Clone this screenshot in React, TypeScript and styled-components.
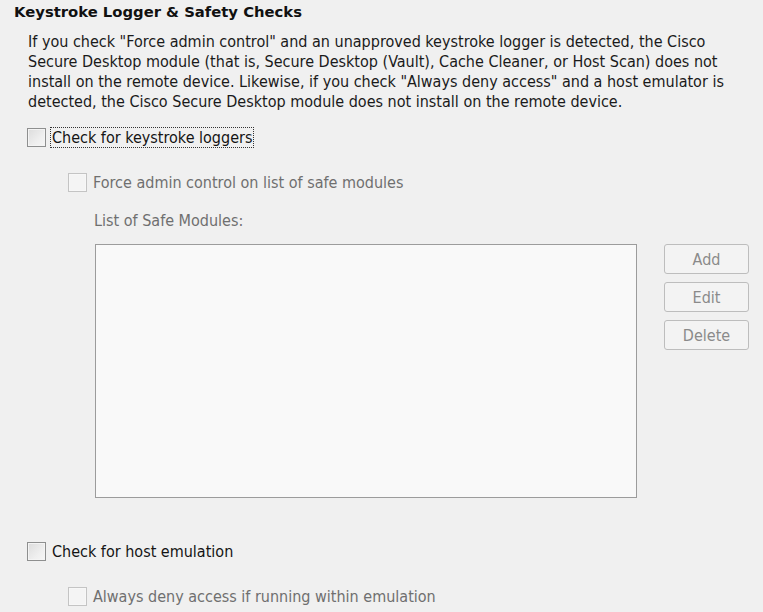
import React from 'react';
import styled, { createGlobalStyle } from 'styled-components';

const GlobalStyle = createGlobalStyle`
  html, body {
    margin: 0;
    padding: 0;
    background: #f0f0f0;
  }
  body {
    font-family: "DejaVu Sans Condensed", "DejaVu Sans", sans-serif;
    color: #1a1a1a;
  }
`;

const Page = styled.div`
  width: 763px;
  height: 612px;
  overflow: hidden;
  padding: 2px 0 0 14px;
  box-sizing: border-box;
`;

const Heading = styled.h2`
  margin: 0;
  font-family: "DejaVu Sans", sans-serif;
  font-size: 14.8px;
  font-weight: bold;
  line-height: 20px;
  color: #111;
`;

const Body = styled.div`
  padding-left: 14px;
  display: flex;
  flex-direction: column;
`;

const Intro = styled.p`
  margin: 10px 0 0;
  width: 720px;
  font-size: 16px;
  line-height: 20px;
  white-space: nowrap;
`;

const CheckRow = styled.label<{ $indent?: number; $top: number }>`
  display: flex;
  align-items: center;
  gap: 5px;
  margin-left: ${(p) => p.$indent ?? -1}px;
  margin-top: ${(p) => p.$top}px;
  font-size: 16px;
  line-height: 20px;
  height: 20px;
`;

const Box = styled.span<{ $disabled?: boolean }>`
  width: 17px;
  height: 17px;
  flex: none;
  border: 1px solid ${(p) => (p.$disabled ? '#c4c4c4' : '#8e8f8f')};
  background: ${(p) =>
    p.$disabled
      ? '#f4f4f4'
      : 'linear-gradient(135deg, #dcdcdc 0%, #eeeeee 60%, #f6f6f6 100%)'};
  box-shadow: inset 0 0 0 1px ${(p) => (p.$disabled ? '#f7f7f7' : '#f4f4f4')};
`;

const Label = styled.span<{ $disabled?: boolean; $focused?: boolean }>`
  color: ${(p) => (p.$disabled ? '#6f6f6f' : '#141414')};
  outline: ${(p) => (p.$focused ? '1px dotted #333' : 'none')};
  outline-offset: 0;
  padding: 0 1px;
  line-height: 19px;
`;

const SubLabel = styled.div`
  margin: 19px 0 0 66px;
  font-size: 16px;
  line-height: 20px;
  color: #6f6f6f;
`;

const ModulesArea = styled.div`
  display: flex;
  gap: 27px;
  margin: 13px 0 0 67px;
`;

const ListBox = styled.div`
  width: 540px;
  height: 252px;
  background: #f9f9f9;
  border: 1px solid #9c9c9c;
`;

const ButtonColumn = styled.div`
  display: flex;
  flex-direction: column;
  gap: 8px;
`;

const Button = styled.button`
  width: 85px;
  height: 30px;
  border: 1px solid #bdbdbd;
  border-radius: 3px;
  background: #f3f3f3;
  color: #8a8a8a;
  font-family: inherit;
  font-size: 16px;
  padding: 0;
`;

interface CheckProps {
  label: string;
  top: number;
  indent?: number;
  disabled?: boolean;
  focused?: boolean;
}

const Check: React.FC<CheckProps> = ({ label, top, indent, disabled, focused }) => (
  <CheckRow $top={top} $indent={indent}>
    <Box $disabled={disabled} />
    <Label $disabled={disabled} $focused={focused}>
      {label}
    </Label>
  </CheckRow>
);

export default function App() {
  return (
    <Page>
      <GlobalStyle />
      <Heading>Keystroke Logger &amp; Safety Checks</Heading>
      <Body>
        <Intro>
          If you check "Force admin control" and an unapproved keystroke logger is detected, the Cisco
          <br />
          Secure Desktop module (that is, Secure Desktop (Vault), Cache Cleaner, or Host Scan) does not
          <br />
          install on the remote device. Likewise, if you check "Always deny access" and a host emulator is
          <br />
          detected, the Cisco Secure Desktop module does not install on the remote device.
        </Intro>
        <Check label="Check for keystroke loggers" top={15} focused />
        <Check label="Force admin control on list of safe modules" top={25} indent={40} disabled />
        <SubLabel>List of Safe Modules:</SubLabel>
        <ModulesArea>
          <ListBox />
          <ButtonColumn>
            <Button disabled>Add</Button>
            <Button disabled>Edit</Button>
            <Button disabled>Delete</Button>
          </ButtonColumn>
        </ModulesArea>
        <Check label="Check for host emulation" top={43} />
        <Check label="Always deny access if running within emulation" top={25} indent={40} disabled />
      </Body>
    </Page>
  );
}
